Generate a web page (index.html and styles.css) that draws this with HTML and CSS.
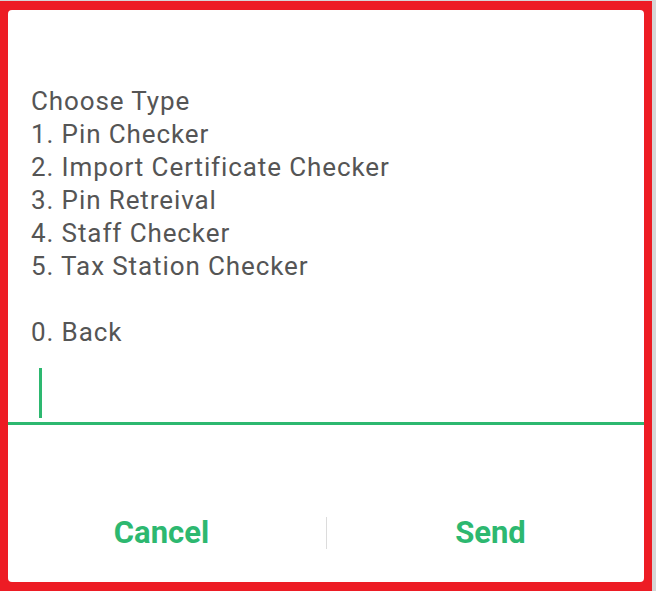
FILE: index.html
```html
<!DOCTYPE html>
<html>
<head>
<meta charset="utf-8">
<link rel="stylesheet" href="styles.css">
</head>
<body>
<div class="frame">
  <div class="dialog">
    <div class="message">
      <div>Choose Type</div>
      <div>1. Pin Checker</div>
      <div>2. Import Certificate Checker</div>
      <div>3. Pin Retreival</div>
      <div>4. Staff Checker</div>
      <div>5. Tax Station Checker</div>
      <div class="blank">&nbsp;</div>
      <div>0. Back</div>
    </div>
    <div class="input"><span class="cursor"></span></div>
    <div class="actions">
      <div class="btn btn-left">Cancel</div>
      <div class="divider"></div>
      <div class="btn btn-right">Send</div>
    </div>
  </div>
</div>
</body>
</html>
```
FILE: styles.css
```css
html, body {
  margin: 0;
  padding: 0;
}
body {
  background: #d6d6d6;
  width: 656px;
  height: 591px;
  overflow: hidden;
  font-family: Roboto, "Liberation Sans", sans-serif;
}
.frame {
  margin-top: 1px;
  width: 636px;
  background: #ed1c24;
  padding: 9px 8px 9px 8px;
}
.dialog {
  background: #ffffff;
  border-radius: 4px;
}
.message {
  padding: 75px 0 0 23px;
  font-size: 26px;
  letter-spacing: 0.9px;
  line-height: 33px;
  color: #555555;
}
.input {
  margin-top: 19px;
  padding: 0 0 4px 31px;
  border-bottom: 3px solid #2db870;
  height: 50px;
}
.cursor {
  display: block;
  width: 3px;
  height: 50px;
  background: #2db870;
}
.actions {
  margin-top: 88px;
  padding-bottom: 29px;
  display: flex;
  align-items: center;
  height: 40px;
}
.btn {
  flex: 1;
  text-align: center;
  font-size: 31px;
  line-height: 40px;
  font-weight: bold;
  color: #2db870;
}
.btn-left {
  padding-right: 11px;
}
.btn-right {
  padding-left: 10px;
}
.divider {
  width: 1px;
  height: 32px;
  background: #dcdcdc;
}
```
